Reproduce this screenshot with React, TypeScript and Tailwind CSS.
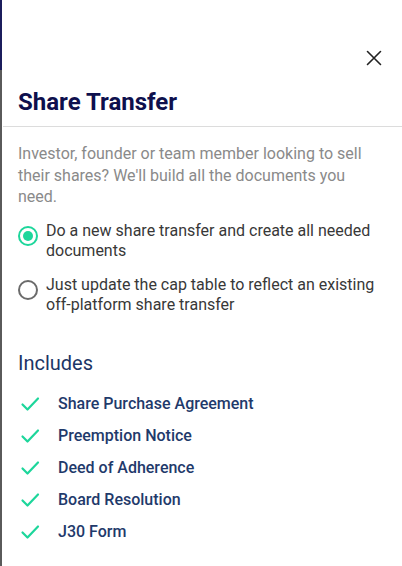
const includes = [
    "Share Purchase Agreement",
    "Preemption Notice",
    "Deed of Adherence",
    "Board Resolution",
    "J30 Form",
];

function CheckMark() {
    return (
        <svg width="20" height="16" viewBox="0 0 20 16" fill="none" className="shrink-0">
            <path d="M2.5 8.5 L7.5 13.5 L18 2.5" stroke="#1dd69b" strokeWidth="2.2" strokeLinecap="round" strokeLinejoin="round" />
        </svg>
    );
}

function CloseIcon() {
    return (
        <svg width="16" height="16" viewBox="0 0 16 16" fill="none">
            <path d="M1.5 1.5 L14.5 14.5 M14.5 1.5 L1.5 14.5" stroke="#222" strokeWidth="1.6" strokeLinecap="round" />
        </svg>
    );
}

function Radio({ checked }: { checked: boolean }) {
    return (
        <span
            className={`mt-[5px] flex h-[20px] w-[20px] shrink-0 items-center justify-center rounded-full border-2 ${checked ? "border-[#1dd69b]" : "border-[#6b6b6b]"}`}
        >
            {checked && <span className="h-[10px] w-[10px] rounded-full bg-[#1dd69b]" />}
        </span>
    );
}

export default function App() {
    return (
        <div className="flex h-[566px] w-[402px] overflow-hidden bg-white font-['Roboto',sans-serif]">
            {/* edge of the page behind the drawer */}
            <div className="flex w-[2px] shrink-0 flex-col">
                <div className="h-[70px] bg-[#1b1d5c]" />
                <div className="flex-1 bg-[#5a5a5a]" />
            </div>

            <div className="flex flex-1 flex-col">
                <div className="flex justify-end pr-[20px] pt-[50px]">
                    <CloseIcon />
                </div>

                <h2 className="ml-[16px] mt-[22px] text-[24px] font-bold leading-[28px] text-[#0e104d]">Share Transfer</h2>

                <div className="ml-[1px] mt-[10px] h-px bg-[#dcdcdc]" />

                <div className="px-[16px]">
                    <p className="mt-[16px] text-[16px] leading-[21.5px] text-[#8a8a8a]">
                        Investor, founder or team member looking to sell their shares? We'll build all the documents you need.
                    </p>

                    <div className="mt-[13px] flex flex-col gap-[14px]">
                        <label className="flex gap-[8px] text-[16px] leading-[20px] text-[#383838]">
                            <Radio checked />
                            <span>Do a new share transfer and create all needed documents</span>
                        </label>
                        <label className="flex gap-[8px] text-[16px] leading-[20px] text-[#383838]">
                            <Radio checked={false} />
                            <span>Just update the cap table to reflect an existing off-platform share transfer</span>
                        </label>
                    </div>

                    <h3 className="mt-[35px] text-[20px] leading-[26px] text-[#1c3566]">Includes</h3>

                    <ul className="mt-[12px] flex flex-col">
                        {includes.map((item) => (
                            <li key={item} className="flex h-[32px] items-center gap-[18px] pl-[2px] text-[16px] font-medium leading-[24px] text-[#1f3a6b]">
                                <CheckMark />
                                <span>{item}</span>
                            </li>
                        ))}
                    </ul>
                </div>
            </div>
        </div>
    );
}
